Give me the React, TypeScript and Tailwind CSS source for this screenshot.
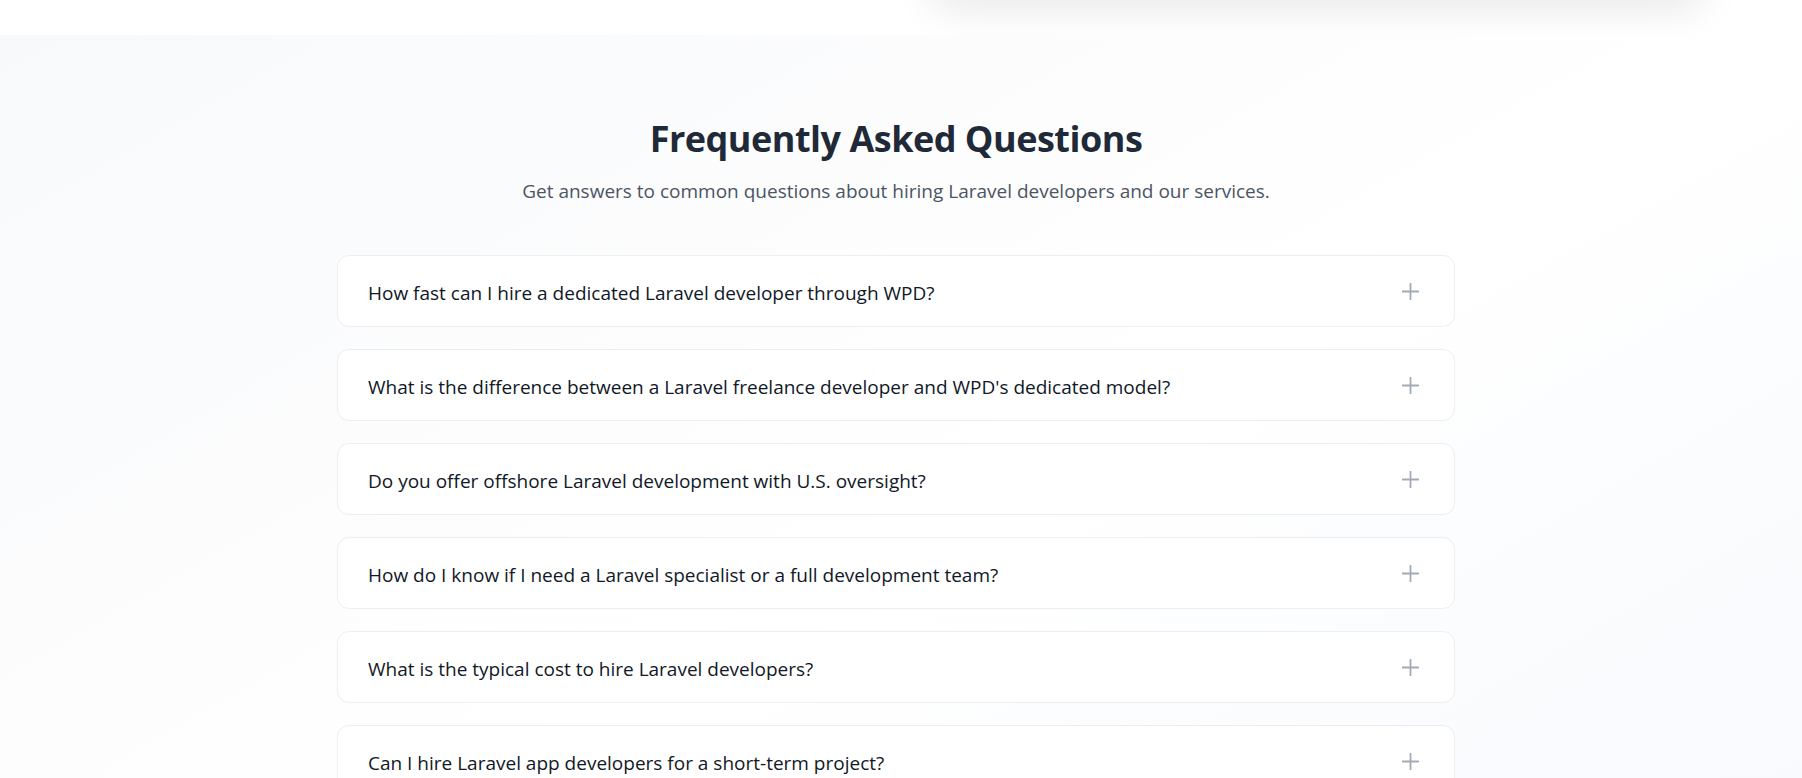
const faqs = [
  "How fast can I hire a dedicated Laravel developer through WPD?",
  "What is the difference between a Laravel freelance developer and WPD's dedicated model?",
  "Do you offer offshore Laravel development with U.S. oversight?",
  "How do I know if I need a Laravel specialist or a full development team?",
  "What is the typical cost to hire Laravel developers?",
  "Can I hire Laravel app developers for a short-term project?",
  "Do your Laravel developers work in my time zone?",
  "What happens if a developer is not the right fit?",
];

function PlusIcon() {
  return (
    <svg width="17" height="17" viewBox="0 0 17 17" fill="none" className="shrink-0">
      <path d="M8.5 0.5v16M0.5 8.5h16" stroke="#a3aab7" strokeWidth="1.8" strokeLinecap="round" />
    </svg>
  );
}

export default function App() {
  return (
    <div className="min-h-screen bg-white" style={{ fontFamily: '"Open Sans", "Noto Sans", sans-serif' }}>
      <div className="relative h-[35px] bg-white overflow-hidden">
        <div className="absolute left-[930px] top-[-70px] w-[775px] h-[70px] rounded-3xl bg-white shadow-[0_10px_40px_rgba(0,0,0,0.09)]" />
      </div>

      <section className="bg-gradient-to-br from-[#f8f9fb] via-white to-[#f5f8fd] pt-[84px] pb-24 pr-[10px]">
        <div className="mx-auto w-[1118px]">
          <div className="text-center">
            <h2 className="text-[36px] leading-10 font-bold text-[#1f2937] tracking-[-0.5px]">
              Frequently Asked Questions
            </h2>
            <p className="mt-[18px] text-[19px] leading-7 text-[#4b5563]">
              Get answers to common questions about hiring Laravel developers and our services.
            </p>
          </div>

          <div className="mt-[50px] flex flex-col gap-[22px]">
            {faqs.map((q) => (
              <div
                key={q}
                className="h-[72px] flex items-center justify-between bg-white border border-[#eceef1] rounded-xl pl-[30px] pr-[35px]"
              >
                <span className="pt-[3px] text-[19px] leading-7 text-[#111827]">{q}</span>
                <PlusIcon />
              </div>
            ))}
          </div>
        </div>
      </section>
    </div>
  );
}
